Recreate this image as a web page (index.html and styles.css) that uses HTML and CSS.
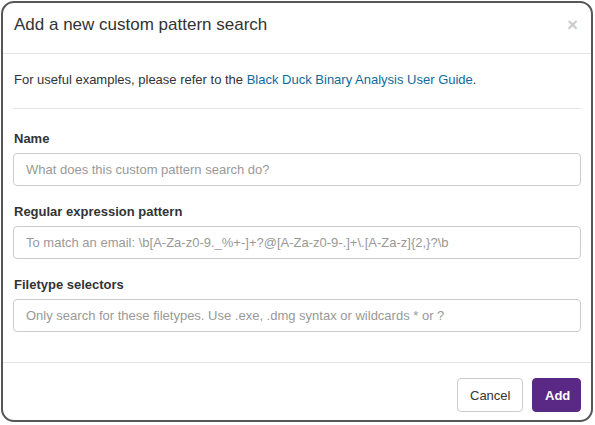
FILE: index.html
```html
<!DOCTYPE html>
<html>
<head>
<meta charset="utf-8">
<link rel="stylesheet" href="styles.css">
</head>
<body>
<div class="modal">
  <div class="modal-header">
    <h4 class="modal-title">Add a new custom pattern search</h4>
    <button class="close" type="button">×</button>
  </div>
  <div class="modal-body">
    <p class="intro">For useful examples, please refer to the <a href="#">Black Duck Binary Analysis User Guide</a>.</p>
    <hr class="sep">
    <div class="form-group">
      <label class="label">Name</label>
      <input class="input" type="text" placeholder="What does this custom pattern search do?">
    </div>
    <div class="form-group">
      <label class="label">Regular expression pattern</label>
      <input class="input" type="text" placeholder="To match an email: \b[A-Za-z0-9._%+-]+?@[A-Za-z0-9-.]+\.[A-Za-z]{2,}?\b">
    </div>
    <div class="form-group">
      <label class="label">Filetype selectors</label>
      <input class="input" type="text" placeholder="Only search for these filetypes. Use .exe, .dmg syntax or wildcards * or ?">
    </div>
  </div>
  <div class="modal-footer">
    <button class="btn btn-default" type="button">Cancel</button>
    <button class="btn btn-primary" type="button">Add</button>
  </div>
</div>
</body>
</html>
```

FILE: styles.css
```css
* { box-sizing: border-box; }
html, body {
  margin: 0;
  padding: 0;
  background: #ffffff;
}
body {
  font-family: "Liberation Sans", Arial, sans-serif;
  font-size: 13px;
  line-height: 20px;
  color: #333333;
}
.modal {
  margin: 1px 0 0 1px;
  width: 592px;
  height: 421px;
  border: 2px solid #575757;
  border-radius: 13px;
  background: #ffffff;
  overflow: hidden;
  display: flex;
  flex-direction: column;
}
.modal-header {
  display: flex;
  align-items: flex-start;
  justify-content: space-between;
  padding: 12px 10px 0 11px;
  border-bottom: 1px solid #e5e5e5;
  height: 51px;
}
.modal-title {
  margin: 0;
  font-size: 17px;
  font-weight: normal;
  line-height: 20px;
  color: #333333;
}
.close {
  border: 0;
  background: transparent;
  padding: 0;
  margin: 0 3px 0 0;
  font-family: "Liberation Sans", Arial, sans-serif;
  font-size: 19px;
  font-weight: bold;
  line-height: 1;
  color: #000000;
  opacity: 0.2;
}
.modal-body {
  padding: 16px 10px 15px 10px;
  flex: 1;
}
.intro {
  margin: 0;
  padding-left: 1px;
}
.intro a {
  color: #0f6b9a;
  text-decoration: none;
}
.sep {
  border: 0;
  border-top: 1px solid #e5e5e5;
  margin: 18px 0 19px 0;
  height: 0;
}
.form-group {
  display: flex;
  flex-direction: column;
  margin-bottom: 15px;
}
.label {
  font-weight: bold;
  padding-top: 1px;
  margin-bottom: 4px;
  padding-left: 1px;
}
.input {
  height: 33px;
  border: 1px solid #cccccc;
  border-radius: 4px;
  padding: 0 12px;
  font-family: "Liberation Sans", Arial, sans-serif;
  font-size: 13px;
  color: #555555;
  background: #ffffff;
}
.input::placeholder {
  color: #999999;
}
.modal-footer {
  display: flex;
  justify-content: flex-end;
  gap: 9px;
  padding: 15px 10px 8px 10px;
  border-top: 1px solid #e5e5e5;
}
.btn {
  height: 34px;
  padding: 0 12px;
  border-radius: 4px;
  font-family: "Liberation Sans", Arial, sans-serif;
  font-size: 13px;
}
.btn-default {
  background: #ffffff;
  border: 1px solid #cccccc;
  color: #333333;
  width: 66px;
}
.btn-primary {
  background: #5a2985;
  border: 1px solid #5a2985;
  color: #ffffff;
  font-weight: bold;
  width: 49px;
}
```
